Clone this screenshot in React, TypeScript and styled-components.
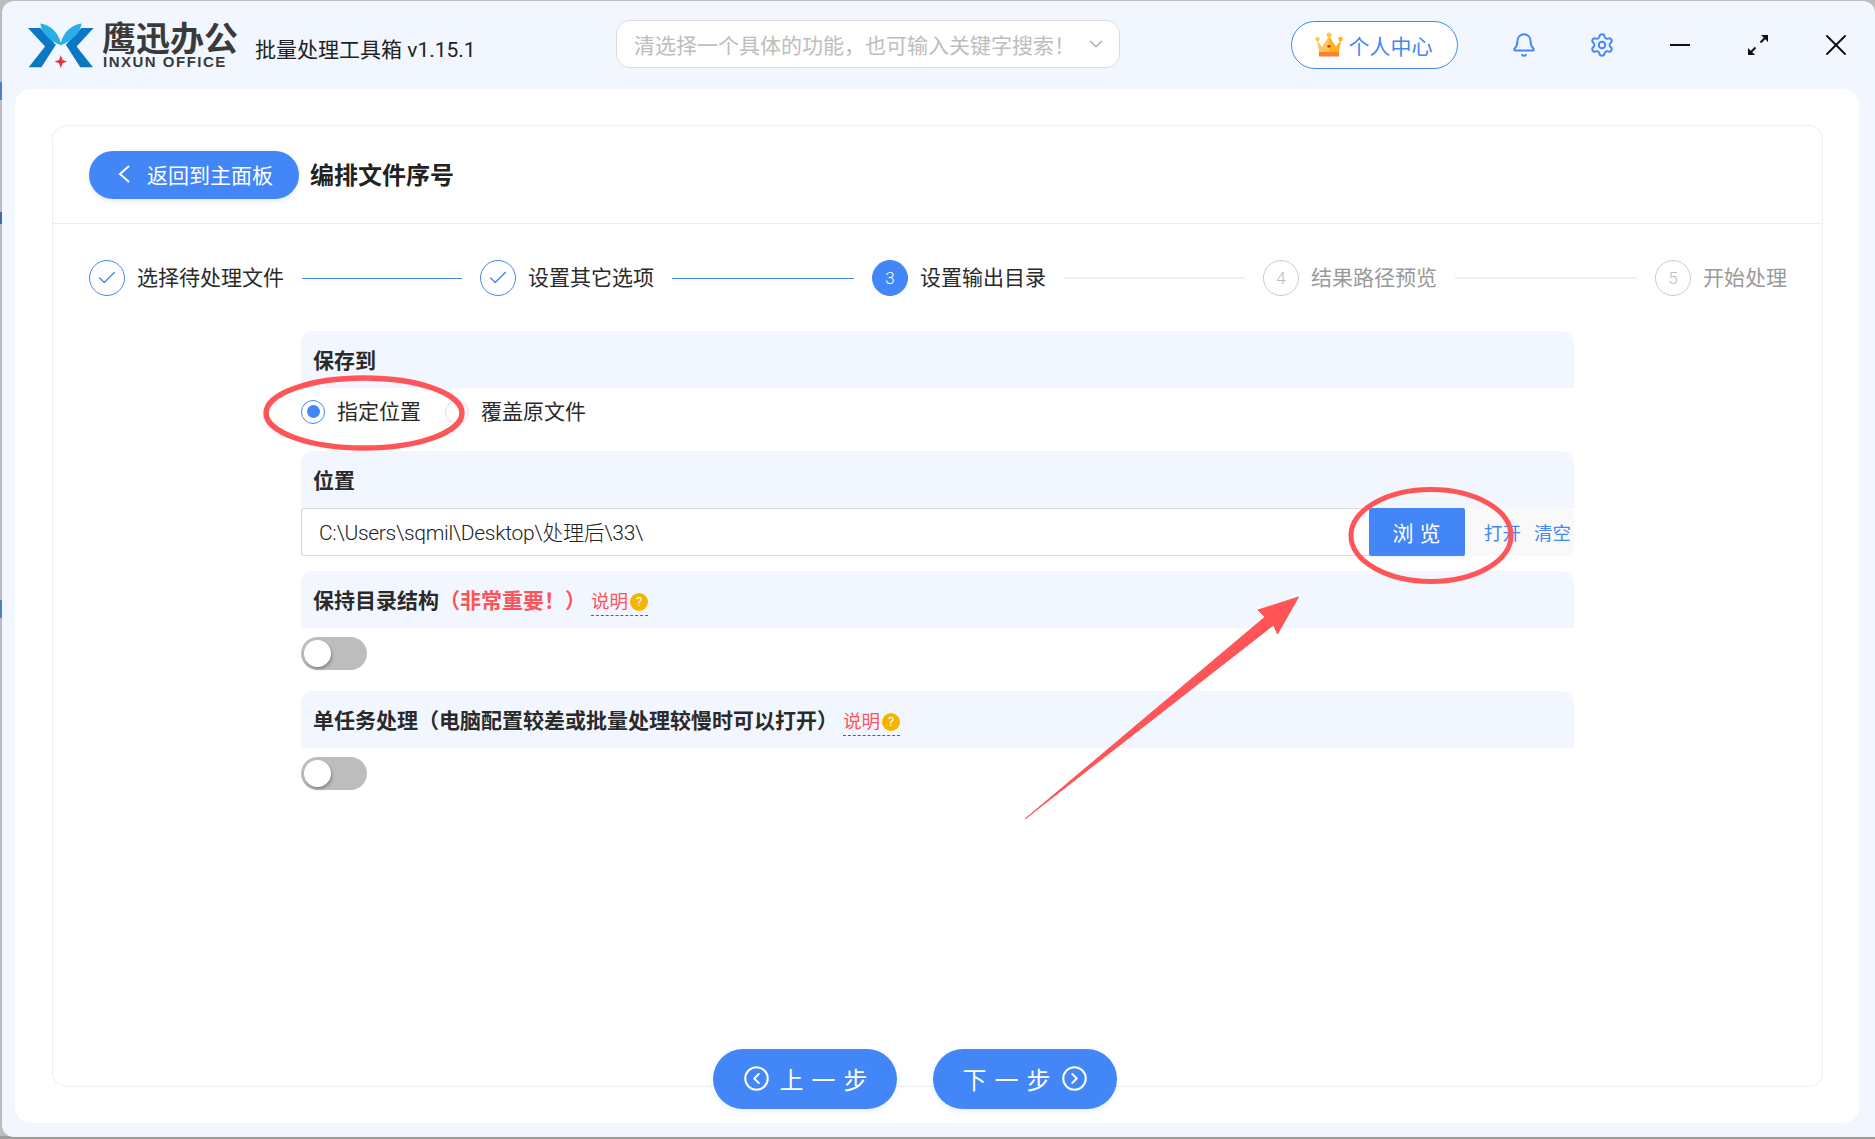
import React from "react";
import styled, {createGlobalStyle} from "styled-components";
import {Bell, Check, ChevronDown, CircleChevronLeft, CircleChevronRight, Settings, X} from "lucide-react";

const GlobalStyle = createGlobalStyle`
  html, body {
    margin: 0;
    padding: 0;
    width: 1875px;
    height: 1139px;
    overflow: hidden;
  }
  body {
    font-family: Roboto, "Noto Sans CJK SC", sans-serif;
    background: linear-gradient(to bottom,
      #bdbdbd 0, #bdbdbd 82px, #4a7fc9 82px, #4a7fc9 100px, #bdbdbd 100px,
      #bdbdbd 212px, #3f6f9e 212px, #3f6f9e 224px, #bdbdbd 224px,
      #bdbdbd 600px, #4a7fc9 600px, #4a7fc9 618px, #bdbdbd 618px,
      #bdbdbd 1136px, #9c9c9c 1136px);
  }
`

const Page = styled.div`
  position: relative;
  width: 1875px;
  height: 1139px;
`

const Window = styled.div`
  margin: 1px 0 0 2px;
  width: 1873px;
  height: 1136px;
  border-radius: 12px 12px 0 12px;
  background: #f2f7ff;
  box-sizing: border-box;
  display: flex;
  flex-direction: column;
`

const Header = styled.div`
  height: 88px;
  flex: none;
  display: flex;
  align-items: center;
  padding-left: 26px;
`

const Logo = styled.div`
  display: flex;
  align-items: center;
  width: 227px;
`

const LogoText = styled.div`
  display: flex;
  flex-direction: column;
  margin-left: 7px;
  color: #3a3a3a;
`

const LogoName = styled.div`
  font-size: 34px;
  line-height: 30px;
  height: 32px;
  font-weight: 700;
  white-space: nowrap;
  font-family: "Noto Sans CJK SC", sans-serif;
`

const LogoSub = styled.div`
  font-family: "Liberation Sans", sans-serif;
  font-size: 15px;
  line-height: 15px;
  font-weight: 700;
  letter-spacing: 1.5px;
  margin-left: 1px;
  white-space: nowrap;
`

const AppTitle = styled.div`
  font-size: 21px;
  color: #222;
  margin-top: 5px;
  width: 361px;
  white-space: nowrap;
`

const Search = styled.div`
  width: 504px;
  height: 48px;
  box-sizing: border-box;
  margin-top: -2px;
  border: 1px solid #dcdcdc;
  border-radius: 14px;
  background: #fff;
  display: flex;
  align-items: center;
  justify-content: space-between;
  padding: 0 12px 0 17px;
  color: #bdbdbd;
  font-size: 21px;
  white-space: nowrap;
  overflow: hidden;
`

const UserButton = styled.div`
  margin-left: 171px;
  margin-top: -1px;
  width: 167px;
  height: 48px;
  box-sizing: border-box;
  border: 1px solid #4286f8;
  border-radius: 24px;
  display: flex;
  align-items: center;
  justify-content: center;
  gap: 6px;
  padding-right: 2px;
  color: #4286f8;
  font-size: 21px;
  background: #fff;
`

const IconGroup = styled.div`
  display: flex;
  margin-left: 27px;
  margin-top: 0;
`

const IconCell = styled.div<{ $blue?: boolean }>`
  width: 78px;
  height: 40px;
  display: flex;
  align-items: center;
  justify-content: center;
  color: ${({$blue}) => $blue ? "#4286f8" : "#111"};
`

const MinimizeBar = styled.div`
  width: 20px;
  height: 2px;
  background: #111;
`

const Panel = styled.div`
  margin-left: 13px;
  width: 1844px;
  height: 1034px;
  flex: none;
  background: #fff;
  border-radius: 16px;
  padding: 36px 0 0 37px;
  box-sizing: border-box;
`

const Card = styled.div`
  width: 1771px;
  height: 962px;
  box-sizing: border-box;
  border: 1px solid #eeeeee;
  border-radius: 14px;
`

const TopRow = styled.div`
  height: 98px;
  box-sizing: border-box;
  padding: 25px 0 0 36px;
  border-bottom: 1px solid #eeeeee;
  display: flex;
  align-items: flex-start;
`

const BackButton = styled.div`
  width: 210px;
  height: 48px;
  border-radius: 24px;
  background: #4286f8;
  color: #fff;
  font-size: 21px;
  display: flex;
  align-items: center;
  padding: 0 0 2px 29px;
  box-sizing: border-box;
  gap: 17px;
  box-shadow: 0 3px 5px rgba(66, 134, 248, 0.12);
  white-space: nowrap;
`

const PageTitle = styled.div`
  margin: 1px 0 0 11px;
  font-size: 24px;
  line-height: 48px;
  font-weight: 700;
  color: #222;
`

const Steps = styled.div`
  display: flex;
  align-items: center;
  height: 36px;
  margin-top: 36px;
  padding-left: 36px;
`

const StepCircle = styled.div<{ $state: string }>`
  width: 36px;
  height: 36px;
  flex: none;
  box-sizing: border-box;
  border-radius: 50%;
  display: flex;
  align-items: center;
  justify-content: center;
  font-size: 17px;
  font-weight: 300;
  color: ${({$state}) => $state === "current" ? "#fff" : $state === "done" ? "#4286f8" : "#bbb"};
  background: ${({$state}) => $state === "current" ? "#4286f8" : "#fff"};
  border: 1px solid ${({$state}) => $state === "todo" ? "#cccccc" : "#4286f8"};
`

const StepLabel = styled.div<{ $state: string }>`
  margin-left: 12px;
  font-size: 21px;
  line-height: 36px;
  white-space: nowrap;
  color: ${({$state}) => $state === "todo" ? "#999" : "#2a2a2a"};
`

const StepLine = styled.div<{ $done: boolean; $width: number }>`
  flex: none;
  width: ${({$width}) => $width}px;
  height: ${({$done}) => $done ? 1 : 2}px;
  margin: 0 18px;
  background: ${({$done}) => $done ? "#4286f8" : "#f0f0f0"};
`

const Form = styled.div`
  width: 1273px;
  margin: 35px 0 0 248px;
`

const Bar = styled.div`
  height: 57px;
  box-sizing: border-box;
  padding: 0 12px 2px;
  background: #f2f7ff;
  border-radius: 12px 12px 0 0;
  display: flex;
  align-items: center;
  font-size: 21px;
  font-weight: 700;
  color: #2a2a2a;
  white-space: nowrap;
`

const Important = styled.span`
  color: #ff5558;
`

const HelpLink = styled.span`
  display: inline-flex;
  align-items: center;
  gap: 2px;
  margin-left: 5px;
  margin-top: 8px;
  color: #ff5558;
  font-size: 18.5px;
  font-weight: 400;
  line-height: 26px;
  border-bottom: 1px dashed #e8262c;
`

const HelpDot = styled.span`
  width: 18px;
  height: 18px;
  border-radius: 50%;
  background: #f5b400;
  color: #fff;
  font-size: 13px;
  line-height: 18px;
  text-align: center;
`

const Section = styled.div<{ $top?: boolean }>`
  height: 48px;
  margin-bottom: 15px;
  display: flex;
  align-items: ${({$top}) => $top ? "flex-start" : "center"};
  padding-top: ${({$top}) => $top ? "9px" : "0"};
  box-sizing: border-box;
`

const RadioOption = styled.div<{ $width: number }>`
  display: flex;
  align-items: center;
  width: ${({$width}) => $width}px;
  font-size: 21px;
  line-height: 28px;
  margin-top: -1px;
  color: #2a2a2a;
  white-space: nowrap;
`

const RadioMark = styled.div<{ $checked: boolean }>`
  width: 24px;
  height: 24px;
  flex: none;
  box-sizing: border-box;
  border-radius: 50%;
  margin-right: 12px;
  border: 1px solid ${({$checked}) => $checked ? "#4286f8" : "#dddddd"};
  display: flex;
  align-items: center;
  justify-content: center;
  &::after {
    content: "";
    display: ${({$checked}) => $checked ? "block" : "none"};
    width: 13px;
    height: 13px;
    border-radius: 50%;
    background: #4286f8;
  }
`

const PathInput = styled.div`
  width: 1068px;
  height: 48px;
  box-sizing: border-box;
  border: 1px solid #d9d9d9;
  border-right: none;
  border-radius: 3px 0 0 3px;
  padding: 0 0 2px 17px;
  display: flex;
  align-items: center;
  font-size: 21px;
  font-weight: 300;
  letter-spacing: -0.3px;
  color: #222;
  white-space: nowrap;
`

const BrowseButton = styled.div`
  width: 96px;
  height: 48px;
  flex: none;
  background: #4286f8;
  color: #fff;
  border-radius: 2px;
  font-size: 21px;
  letter-spacing: 6px;
  text-indent: 5px;
  display: flex;
  align-items: center;
  justify-content: center;
  box-shadow: 0 3px 3px rgba(0, 0, 0, 0.04);
`

const PathLinks = styled.div`
  flex: 1;
  height: 48px;
  background: #f9f9f9;
  border-radius: 0 6px 6px 0;
  display: flex;
  align-items: center;
  gap: 13px;
  padding-left: 19px;
  box-sizing: border-box;
  color: #4286f8;
  font-size: 18.5px;
  white-space: nowrap;
`

const Toggle = styled.div`
  width: 66px;
  height: 33px;
  border-radius: 17px;
  background: #bdbdbd;
  padding: 3px;
  box-sizing: border-box;
`

const ToggleKnob = styled.div`
  width: 27px;
  height: 27px;
  border-radius: 50%;
  background: #fff;
  box-shadow: 1px 2px 3px rgba(0, 0, 0, 0.3);
`

const Footer = styled.div`
  display: flex;
  gap: 36px;
  position: relative;
  margin: -38px 0 0 661px;
`

const StepButton = styled.div`
  width: 184px;
  height: 60px;
  border-radius: 30px;
  background: #4286f8;
  color: #fff;
  font-size: 24px;
  letter-spacing: 8px;
  display: flex;
  align-items: center;
  justify-content: center;
  gap: 10px;
  padding-bottom: 1px;
  box-sizing: border-box;
  box-shadow: 0 3px 5px rgba(66, 134, 248, 0.1);
  white-space: nowrap;
`

const StepButtonText = styled.span`
  margin-right: -8px;
`

const Annotations = styled.svg`
  position: absolute;
  left: 0;
  top: 0;
  pointer-events: none;
`

const LogoMark = () => (
    <svg width="67" height="47" viewBox="85 60 200 140">
        <path d="M85 78 L122 78 L168 128 L125 195 L87 195 L136 133Z" fill="#0a78c2"/>
        <path d="M281 78 L244 78 L198 128 L241 195 L279 195 L230 133Z" fill="#0a78c2"/>
        <path d="M122 64 C150 67 175 90 183 122 C191 90 216 67 245 64 C240 96 215 116 183 129 C151 116 126 96 122 64Z" fill="#2badE6"/>
        <path d="M183 158 L188 173 L202 178 L188 183 L183 198 L178 183 L164 178 L178 173Z" fill="#e8323c"/>
    </svg>
)

const Crown = () => (
    <svg width="28" height="25" viewBox="0 0 28 25">
        <path d="M2 8 L7 15 L14 4 L21 15 L26 8 L24 20 H4Z" fill="#fbc65b"/>
        <path d="M14 4 L21 15 L26 8 L24 20 H14Z" fill="#ffb21e"/>
        <circle cx="2.5" cy="7" r="2.2" fill="#fbc65b"/>
        <circle cx="14" cy="3" r="2.5" fill="#fbc65b"/>
        <circle cx="25.5" cy="7" r="2.2" fill="#ffb21e"/>
        <rect x="4" y="20" width="20" height="4.5" fill="#ff7f2a"/>
        <rect x="12.5" y="13" width="3" height="2.5" fill="#d9352b"/>
    </svg>
)

const ExpandIcon = () => (
    <svg width="20" height="20" viewBox="0 0 20 20" fill="#111">
        <path d="M7.5 12.5 L2 18" stroke="#111" strokeWidth="2"/>
        <path d="M0 13 L7 20 L0 20Z"/>
        <path d="M12.5 7.5 L18 2" stroke="#111" strokeWidth="2"/>
        <path d="M13 0 L20 0 L20 7Z"/>
    </svg>
)

const BackArrow = () => (
    <svg width="12" height="18" viewBox="0 0 12 18" fill="none" stroke="#fff" strokeWidth="2">
        <path d="M11 1 L2 9 L11 17"/>
    </svg>
)

const stepList = [
    {label: "选择待处理文件", state: "done", line: 160},
    {label: "设置其它选项", state: "done", line: 182},
    {label: "设置输出目录", state: "current", line: 181},
    {label: "结果路径预览", state: "todo", line: 182},
    {label: "开始处理", state: "todo", line: 0},
]

const App = () => {
    return (<Page>
        <GlobalStyle/>
        <Window>
            <Header>
                <Logo>
                    <LogoMark/>
                    <LogoText>
                        <LogoName>鹰迅办公</LogoName>
                        <LogoSub>INXUN OFFICE</LogoSub>
                    </LogoText>
                </Logo>
                <AppTitle>批量处理工具箱 v1.15.1</AppTitle>
                <Search>
                    <span>清选择一个具体的功能，也可输入关键字搜索！</span>
                    <ChevronDown size={22} strokeWidth={1.5} color="#aaa"/>
                </Search>
                <UserButton><Crown/>个人中心</UserButton>
                <IconGroup>
                    <IconCell $blue><Bell size={26} strokeWidth={1.8}/></IconCell>
                    <IconCell $blue><Settings size={26} strokeWidth={1.8}/></IconCell>
                    <IconCell><MinimizeBar/></IconCell>
                    <IconCell><ExpandIcon/></IconCell>
                    <IconCell><X size={36} strokeWidth={1.3}/></IconCell>
                </IconGroup>
            </Header>
            <Panel>
                <Card>
                    <TopRow>
                        <BackButton><BackArrow/>返回到主面板</BackButton>
                        <PageTitle>编排文件序号</PageTitle>
                    </TopRow>
                    <Steps>
                        {stepList.map((step, index) => (
                            <React.Fragment key={step.label}>
                                <StepCircle $state={step.state}>
                                    {step.state === "done" ? <Check size={22} strokeWidth={1.5}/> : index + 1}
                                </StepCircle>
                                <StepLabel $state={step.state}>{step.label}</StepLabel>
                                {step.line > 0 && <StepLine $done={step.state === "done"} $width={step.line}/>}
                            </React.Fragment>
                        ))}
                    </Steps>
                    <Form>
                        <Bar>保存到</Bar>
                        <Section>
                            <RadioOption $width={144}><RadioMark $checked={true}/>指定位置</RadioOption>
                            <RadioOption $width={200}><RadioMark $checked={false}/>覆盖原文件</RadioOption>
                        </Section>
                        <Bar>位置</Bar>
                        <Section>
                            <PathInput>C:\Users\sqmil\Desktop\处理后\33\</PathInput>
                            <BrowseButton>浏览</BrowseButton>
                            <PathLinks><span>打开</span><span>清空</span></PathLinks>
                        </Section>
                        <Bar>
                            保持目录结构<Important>（非常重要！）</Important>
                            <HelpLink>说明<HelpDot>?</HelpDot></HelpLink>
                        </Bar>
                        <Section $top><Toggle><ToggleKnob/></Toggle></Section>
                        <Bar>
                            单任务处理（电脑配置较差或批量处理较慢时可以打开）
                            <HelpLink>说明<HelpDot>?</HelpDot></HelpLink>
                        </Bar>
                        <Section $top><Toggle><ToggleKnob/></Toggle></Section>
                    </Form>
                </Card>
                <Footer>
                    <StepButton><CircleChevronLeft size={27} strokeWidth={1.8}/><StepButtonText>上一步</StepButtonText></StepButton>
                    <StepButton><StepButtonText>下一步</StepButtonText><CircleChevronRight size={27} strokeWidth={1.8}/></StepButton>
                </Footer>
            </Panel>
        </Window>
        <Annotations width="1875" height="1139" viewBox="0 0 1875 1139">
            <ellipse cx="364" cy="412" rx="98" ry="35" fill="none" stroke="#ff5558" strokeWidth="5.5"/>
            <ellipse cx="1431" cy="534.5" rx="80" ry="46" fill="none" stroke="#ff5558" strokeWidth="5"/>
            <path d="M1025 818 L1265 616 L1258 609 L1298.5 596 L1277.5 633 L1273.6 624Z" fill="#ff5558" stroke="#ff5558" strokeWidth="1"/>
        </Annotations>
    </Page>)
}

export default App
